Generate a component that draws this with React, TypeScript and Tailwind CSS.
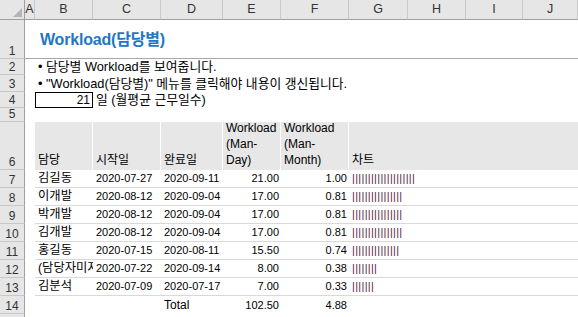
import React from "react";

const rows = [
  { n: 7, name: "김길동", s: "2020-07-27", e: "2020-09-11", md: "21.00", mm: "1.00", bars: 20 },
  { n: 8, name: "이개발", s: "2020-08-12", e: "2020-09-04", md: "17.00", mm: "0.81", bars: 16 },
  { n: 9, name: "박개발", s: "2020-08-12", e: "2020-09-04", md: "17.00", mm: "0.81", bars: 16 },
  { n: 10, name: "김개발", s: "2020-08-12", e: "2020-09-04", md: "17.00", mm: "0.81", bars: 16 },
  { n: 11, name: "홍길동", s: "2020-07-15", e: "2020-08-11", md: "15.50", mm: "0.74", bars: 15 },
  { n: 12, name: "(담당자미지정)", s: "2020-07-22", e: "2020-09-14", md: "8.00", mm: "0.38", bars: 8 },
  { n: 13, name: "김분석", s: "2020-07-09", e: "2020-07-17", md: "7.00", mm: "0.33", bars: 7 },
];

const cols = ["A", "B", "C", "D", "E", "F", "G", "H", "I", "J"];

function RowHead({ n }: { n: number }) {
  return (
    <div className="bg-[#e6e6e6] border-r border-b border-r-[#9f9f9f] border-b-[#c8c8c8] flex items-end justify-center pb-[1px] text-[12px] leading-[12px] text-[#333] overflow-hidden">
      {n}
    </div>
  );
}

export default function App() {
  return (
    <div className="w-[578px] h-[317px] overflow-hidden bg-white font-['Liberation_Sans','Noto_Sans_CJK_KR',sans-serif] text-black grid grid-cols-[25px_10px_58px_68px_62px_58px_68px_59px_58px_57px_1fr] grid-rows-[20px_39px_16px_17px_16px_14px_48px_18px_18px_18px_18px_18px_18px_18px_18px_1fr]">
      {/* column headers */}
      <div className="relative bg-[#e6e6e6] border-r border-b border-[#9f9f9f]">
        <div className="absolute right-[2px] bottom-[2px] w-0 h-0 border-l-[9px] border-l-transparent border-b-[9px] border-b-[#b5b5b5]" />
      </div>
      {cols.map((c) => (
        <div
          key={c}
          className="bg-[#e6e6e6] border-b border-r border-b-[#9f9f9f] border-r-[#c8c8c8] flex items-center justify-center text-[12.5px] text-[#333]"
        >
          {c}
        </div>
      ))}

      {/* row 1 */}
      <RowHead n={1} />
      <div className="col-span-10 border-b border-[#a8a8a8] flex items-center pl-[15px] pt-[1px]">
        <span className="text-[16px] font-bold text-[#1f77c6] tracking-[-0.2px]">Workload(담당별)</span>
      </div>

      {/* row 2 */}
      <RowHead n={2} />
      <div className="col-span-10 flex items-center pl-[13px] text-[12.8px] whitespace-nowrap">
        • 담당별 Workload를 보여줍니다.
      </div>

      {/* row 3 */}
      <RowHead n={3} />
      <div className="col-span-10 flex items-center pl-[13px] text-[12.8px] whitespace-nowrap">
        • "Workload(담당별)" 메뉴를 클릭해야 내용이 갱신됩니다.
      </div>

      {/* row 4 */}
      <RowHead n={4} />
      <div />
      <div className="border border-black flex items-center justify-end pr-[2px] text-[12px]">21</div>
      <div className="col-span-8 flex items-center pl-[3px] text-[12.8px] whitespace-nowrap">일 (월평균 근무일수)</div>

      {/* row 5 */}
      <RowHead n={5} />
      <div className="col-span-10" />

      {/* row 6 header */}
      <RowHead n={6} />
      <div />
      <div className="bg-[#e7e7e7] border-r border-white flex items-end pl-[3px] pb-[2px] text-[12px] leading-[16px]">담당</div>
      <div className="bg-[#e7e7e7] border-r border-white flex items-end pl-[3px] pb-[2px] text-[12px] leading-[16px]">시작일</div>
      <div className="bg-[#e7e7e7] border-r border-white flex items-end pl-[3px] pb-[2px] text-[12px] leading-[16px]">완료일</div>
      <div className="bg-[#e7e7e7] border-r border-white flex items-end pl-[3px] pb-[2px] text-[12px] leading-[16px]">
        Workload (Man-Day)
      </div>
      <div className="bg-[#e7e7e7] border-r border-white flex items-end pl-[3px] pb-[2px] text-[12px] leading-[16px]">
        Workload (Man-Month)
      </div>
      <div className="col-span-4 bg-[#e7e7e7] flex items-end pl-[3px] pb-[2px] text-[12px] leading-[16px]">차트</div>

      {/* data rows */}
      {rows.map((r) => (
        <React.Fragment key={r.n}>
          <RowHead n={r.n} />
          <div />
          <div className="border-b border-[#d9d9d9] flex items-end pl-[3px] pb-[1px] text-[12.3px] leading-[15px] whitespace-nowrap overflow-hidden">
            {r.name}
          </div>
          <div className="border-b border-[#d9d9d9] flex items-end pl-[3px] pb-[1px] text-[11px] leading-[15px]">{r.s}</div>
          <div className="border-b border-[#d9d9d9] flex items-end pl-[3px] pb-[1px] text-[11px] leading-[15px]">{r.e}</div>
          <div className="border-b border-[#d9d9d9] flex items-end justify-end pr-[2px] pb-[1px] text-[11px] leading-[15px]">{r.md}</div>
          <div className="border-b border-[#d9d9d9] flex items-end justify-end pr-[2px] pb-[1px] text-[11px] leading-[15px]">{r.mm}</div>
          <div className="col-span-4 border-b border-[#d9d9d9] flex items-end pl-[3px] pb-[1px] text-[11px] leading-[15px] tracking-[0.3px] text-[#5e2444] whitespace-nowrap overflow-hidden">
            {"|".repeat(r.bars)}
          </div>
        </React.Fragment>
      ))}

      {/* row 14 */}
      <RowHead n={14} />
      <div />
      <div />
      <div />
      <div className="flex items-end pl-[3px] pb-[1px] text-[12px] leading-[15px]">Total</div>
      <div className="flex items-end justify-end pr-[2px] pb-[1px] text-[11px] leading-[15px]">102.50</div>
      <div className="flex items-end justify-end pr-[2px] pb-[1px] text-[11px] leading-[15px]">4.88</div>
      <div className="col-span-4" />

      {/* row 15 */}
      <div className="bg-[#e6e6e6] border-r border-r-[#9f9f9f] flex items-start justify-center text-[12px] leading-[14px] text-[#333] overflow-hidden pt-[2px]">
        15
      </div>
      <div className="col-span-10" />
    </div>
  );
}
